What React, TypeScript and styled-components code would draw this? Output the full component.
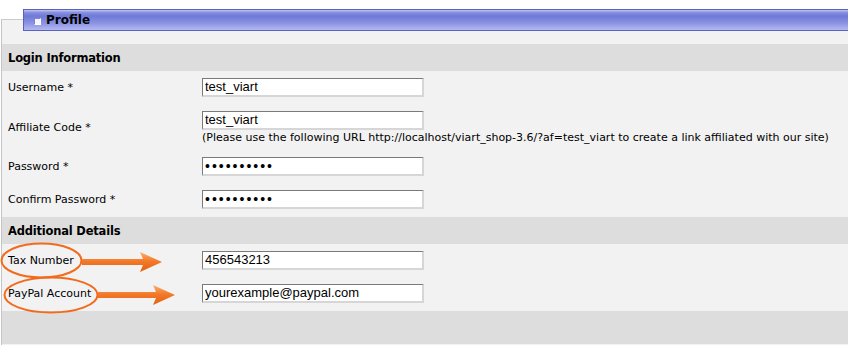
import styled, { createGlobalStyle } from 'styled-components';

const GlobalStyle = createGlobalStyle`
  html, body {
    margin: 0;
    padding: 0;
    background: #ffffff;
    overflow: hidden;
  }
  body {
    font-family: "DejaVu Sans", Verdana, sans-serif;
    font-size: 11px;
    color: #000;
  }
`;

const Page = styled.div`
  position: relative;
  width: 848px;
  height: 345px;
  padding-top: 19px;
  box-sizing: border-box;
`;

const Panel = styled.div`
  margin-left: 1px;
  border-top: 1px solid #cacaca;
  border-left: 1px solid #c4c4c4;
  background: #f2f2f2;
  padding-bottom: 1px;
`;

const TitleBar = styled.div`
  display: flex;
  align-items: center;
  gap: 5px;
  margin: -11px 0 13px 21px;
  height: 20px;
  padding-left: 10px;
  border: 1px solid #5a62c0;
  border-right: none;
  background: linear-gradient(
    #c4c8f4 0%,
    #8890e0 12%,
    #6f79d8 30%,
    #8a92e2 65%,
    #b4b9f2 100%
  );
`;

const TitleIcon = styled.span`
  width: 5px;
  height: 5px;
  margin-top: 2px;
  background: #f4f5ff;
  border: 1px solid #7c84cc;
  border-right-color: #ffffff;
  border-bottom-color: #ffffff;
`;

const TitleText = styled.span`
  font-weight: bold;
  font-size: 12px;
  color: #000;
`;

const SectionHeader = styled.div`
  display: flex;
  align-items: center;
  height: 27px;
  padding-left: 6px;
  background: #dddddd;
  font-weight: bold;
  font-size: 11.5px;
  letter-spacing: -0.2px;
`;

const Row = styled.div<{ $tall?: boolean }>`
  display: grid;
  grid-template-columns: 194px 1fr;
  align-items: center;
  padding: ${(p) => (p.$tall ? '7px 0 8px 6px' : '7px 0 7px 6px')};
`;

const Label = styled.div`
  font-size: 11px;
  color: #000;
`;

const Field = styled.div`
  display: flex;
  flex-direction: column;
`;

const TextInput = styled.input<{ $secret?: boolean }>`
  box-sizing: border-box;
  width: 222px;
  height: 19px;
  margin: 0;
  padding: 0 2px 1px;
  border-style: solid;
  border-width: 1px 2px 2px 1px;
  border-color: #7a7a7a #d6d6d6 #d6d6d6 #7a7a7a;
  background: #ffffff;
  font-family: "Liberation Sans", Arial, sans-serif;
  font-size: ${(p) => (p.$secret ? '14px' : '13px')};
  letter-spacing: ${(p) => (p.$secret ? '2px' : 'normal')};
  color: #000;
  outline: none;
`;

const Hint = styled.div`
  font-size: 11px;
  line-height: 14px;
  margin-top: 1px;
  margin-bottom: -2px;
  white-space: nowrap;
  color: #000;
`;

const FooterBand = styled.div`
  height: 33px;
  background: #dddddd;
`;

const Overlay = styled.svg`
  position: absolute;
  left: 0;
  top: 0;
  pointer-events: none;
`;

type FieldRow = {
  label: string;
  value: string;
  secret?: boolean;
  hint?: string;
};

const loginRows: FieldRow[] = [
  { label: 'Username *', value: 'test_viart' },
  {
    label: 'Affiliate Code *',
    value: 'test_viart',
    hint: '(Please use the following URL http://localhost/viart_shop-3.6/?af=test_viart to create a link affiliated with our site)',
  },
  { label: 'Password *', value: 'xxxxxxxxxx', secret: true },
  { label: 'Confirm Password *', value: 'xxxxxxxxxx', secret: true },
];

const extraRows: FieldRow[] = [
  { label: 'Tax Number', value: '456543213' },
  { label: 'PayPal Account', value: 'yourexample@paypal.com' },
];

const renderRow = (row: FieldRow, index: number, last: boolean) => (
  <Row key={index} $tall={last}>
    <Label>{row.label}</Label>
    <Field>
      <TextInput
        readOnly
        type={row.secret ? 'password' : 'text'}
        $secret={row.secret}
        defaultValue={row.value}
      />
      {row.hint && <Hint>{row.hint}</Hint>}
    </Field>
  </Row>
);

// orange callout arrow: shaft + head, pointing right
const Arrow = ({ x1, x2, y }: { x1: number; x2: number; y: number }) => {
  const head = x2 - 19;
  return (
    <path
      d={`M${x1} ${y - 3} L${head} ${y - 3} L${head - 3} ${y - 10} L${x2} ${y} L${head - 3} ${y + 10} L${head} ${y + 3} L${x1} ${y + 3} Z`}
      fill="url(#arrowFill)"
    />
  );
};

const App = () => (
  <>
    <GlobalStyle />
    <Page>
      <Panel>
        <TitleBar>
          <TitleIcon />
          <TitleText>Profile</TitleText>
        </TitleBar>

        <SectionHeader>Login Information</SectionHeader>
        {loginRows.map((r, i) => renderRow(r, i, i === loginRows.length - 1))}

        <SectionHeader>Additional Details</SectionHeader>
        {extraRows.map((r, i) => renderRow(r, i, i === extraRows.length - 1))}

        <FooterBand />
      </Panel>

      <Overlay width="848" height="345" viewBox="0 0 848 345">
        <defs>
          <linearGradient id="arrowFill" x1="0" y1="0" x2="0" y2="1">
            <stop offset="0" stopColor="#fbb074" />
            <stop offset="0.45" stopColor="#f37a2a" />
            <stop offset="1" stopColor="#e2600f" />
          </linearGradient>
        </defs>
        <ellipse cx="41.5" cy="260.5" rx="40" ry="17" fill="none" stroke="#f26b1d" strokeWidth="2" />
        <ellipse cx="51" cy="295" rx="46.5" ry="17.5" fill="none" stroke="#f26b1d" strokeWidth="2" />
        <Arrow x1={82} x2={162} y={262} />
        <Arrow x1={98} x2={175} y={295} />
      </Overlay>
    </Page>
  </>
);

export default App;
